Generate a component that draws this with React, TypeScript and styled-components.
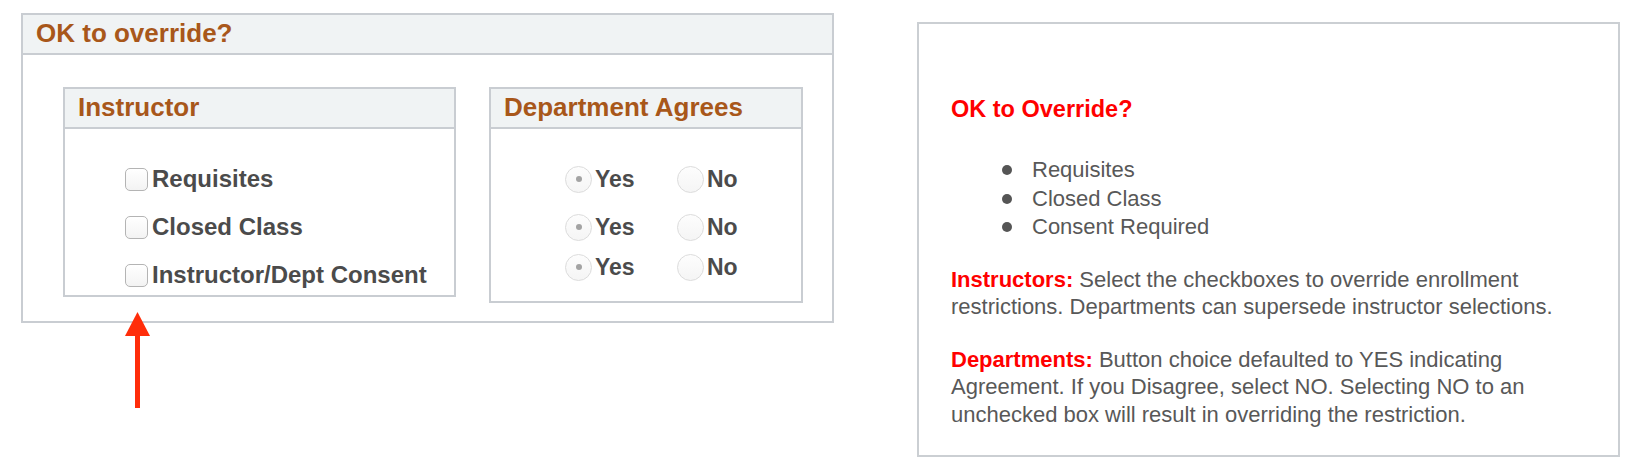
import styled, { createGlobalStyle } from 'styled-components';

const GlobalStyle = createGlobalStyle`
  html, body {
    margin: 0;
    padding: 0;
    background: #fff;
  }
  body {
    font-family: 'Liberation Sans', Arial, Helvetica, sans-serif;
  }
`;

const Page = styled.div`
  position: relative;
  display: flex;
  align-items: flex-start;
  gap: 83px;
  padding: 13px 0 0 21px;
  width: 1651px;
  height: 473px;
  box-sizing: border-box;
`;

const Panel = styled.section`
  width: 813px;
  height: 310px;
  box-sizing: border-box;
  border: 2px solid #c9cdd2;
  background: #fff;
`;

const PanelHeader = styled.div`
  height: 40px;
  box-sizing: border-box;
  background: #f0f3f4;
  border-bottom: 2px solid #c9cdd2;
  padding-left: 13px;
  font-size: 26px;
  font-weight: 700;
  line-height: 36px;
  color: #a8571a;
  white-space: nowrap;
`;

const PanelBody = styled.div`
  display: flex;
  align-items: flex-start;
  gap: 33px;
  padding: 32px 29px 0 40px;
`;

const SubPanel = styled.div<{ $width: number }>`
  width: ${(p) => p.$width}px;
  box-sizing: border-box;
  border: 2px solid #c9cdd2;
`;

const CheckList = styled.div`
  display: flex;
  flex-direction: column;
  gap: 24px;
  padding: 38px 0 8px 60px;
`;

const CheckRow = styled.label`
  display: flex;
  align-items: center;
  gap: 4px;
  height: 24px;
`;

const Box = styled.span`
  width: 23px;
  height: 23px;
  box-sizing: border-box;
  border: 1px solid #b4b4b4;
  border-radius: 5px;
  background: linear-gradient(#ffffff, #f3f3f3);
  flex: none;
`;

const OptionText = styled.span<{ $size: number }>`
  font-size: ${(p) => p.$size}px;
  font-weight: 700;
  color: #4b4b4b;
  white-space: nowrap;
`;

const RadioList = styled.div`
  display: flex;
  flex-direction: column;
  padding: 36.5px 0 20.5px 74px;
`;

const RadioRow = styled.div<{ $gap: number }>`
  display: grid;
  grid-template-columns: 112px auto;
  height: 27px;
  margin-top: ${(p) => p.$gap}px;
`;

const RadioOption = styled.label`
  display: flex;
  align-items: center;
  gap: 3px;
`;

const Radio = styled.span<{ $on?: boolean }>`
  position: relative;
  width: 27px;
  height: 27px;
  box-sizing: border-box;
  border: 1px solid #dcdcdc;
  border-radius: 50%;
  background: linear-gradient(#fdfdfd, #f5f5f5);
  flex: none;

  &::after {
    content: '';
    display: ${(p) => (p.$on ? 'block' : 'none')};
    position: absolute;
    left: 50%;
    top: 50%;
    width: 6px;
    height: 6px;
    margin: -3px 0 0 -3px;
    border-radius: 50%;
    background: #a3a3a3;
  }
`;

const HelpPanel = styled.aside`
  width: 703px;
  height: 435px;
  margin-top: 9px;
  box-sizing: border-box;
  border: 2px solid #cbcfd3;
  padding: 71px 37px 0 32px;
  color: #585858;
  font-size: 22px;
`;

const HelpTitle = styled.h2`
  margin: 0;
  font-size: 23.5px;
  line-height: 28px;
  font-weight: 700;
  color: #ff0000;
`;

const Bullets = styled.ul`
  list-style: none;
  margin: 33px 0 0;
  padding: 0 0 0 51px;
`;

const Bullet = styled.li`
  display: flex;
  align-items: center;
  gap: 20px;
  line-height: 28.5px;

  &::before {
    content: '';
    width: 10px;
    height: 10px;
    border-radius: 50%;
    background: #555;
    flex: none;
  }
`;

const Para = styled.p<{ $top: number }>`
  margin: ${(p) => p.$top}px 0 0;
  line-height: 27.5px;
`;

const Red = styled.strong`
  color: #ff0000;
`;

const Arrow = styled.svg`
  position: absolute;
  left: 124px;
  top: 311px;
`;

const checks = ['Requisites', 'Closed Class', 'Instructor/Dept Consent'];
const radioGaps = [0, 21, 13];

export default function App() {
  return (
    <>
      <GlobalStyle />
      <Page>
        <Panel>
          <PanelHeader>OK to override?</PanelHeader>
          <PanelBody>
            <SubPanel $width={393}>
              <PanelHeader>Instructor</PanelHeader>
              <CheckList>
                {checks.map((c) => (
                  <CheckRow key={c}>
                    <Box />
                    <OptionText $size={24}>{c}</OptionText>
                  </CheckRow>
                ))}
              </CheckList>
            </SubPanel>
            <SubPanel $width={314}>
              <PanelHeader>Department Agrees</PanelHeader>
              <RadioList>
                {radioGaps.map((g, i) => (
                  <RadioRow key={i} $gap={g}>
                    <RadioOption>
                      <Radio $on />
                      <OptionText $size={23}>Yes</OptionText>
                    </RadioOption>
                    <RadioOption>
                      <Radio />
                      <OptionText $size={23}>No</OptionText>
                    </RadioOption>
                  </RadioRow>
                ))}
              </RadioList>
            </SubPanel>
          </PanelBody>
        </Panel>

        <HelpPanel>
          <HelpTitle>OK to Override?</HelpTitle>
          <Bullets>
            <Bullet>Requisites</Bullet>
            <Bullet>Closed Class</Bullet>
            <Bullet>Consent Required</Bullet>
          </Bullets>
          <Para $top={24}>
            <Red>Instructors:</Red> Select the checkboxes to override enrollment
            restrictions. Departments can supersede instructor selections.
          </Para>
          <Para $top={25}>
            <Red>Departments:</Red> Button choice defaulted to YES indicating
            Agreement. If you Disagree, select NO. Selecting NO to an unchecked
            box will result in overriding the restriction.
          </Para>
        </HelpPanel>

        <Arrow width="28" height="98" viewBox="0 0 28 98">
          <polygon points="13.5,1 26,25 1,25" fill="#ff2d0a" />
          <rect x="11" y="24" width="5" height="73" fill="#ff2d0a" />
        </Arrow>
      </Page>
    </>
  );
}
